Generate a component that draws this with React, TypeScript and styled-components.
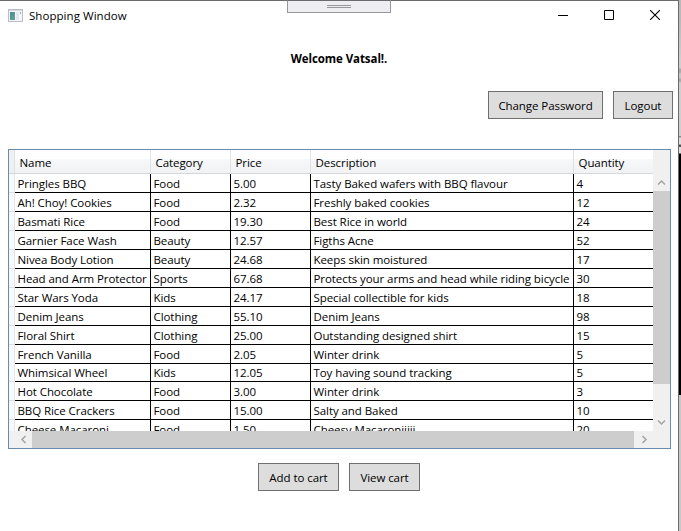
import React from 'react';
import styled, { createGlobalStyle } from 'styled-components';

const GlobalStyle = createGlobalStyle`
  * { box-sizing: border-box; }
  body {
    margin: 0;
    overflow: hidden;
    background: #fff;
    color: #000;
    font: 11.5px/16px "Open Sans", "Noto Sans", sans-serif;
    letter-spacing: -0.07px;
  }
`;

const Screen = styled.div`
  display: grid;
  grid-template-columns: 679px 2px;
  width: 681px;
  height: 531px;
`;

const Window = styled.main`
  position: relative;
  display: flex;
  flex-direction: column;
  border-top: 1px solid #6b6a6c;
  border-right: 1px solid #6b6a6c;
  background: #fff;
`;

const Backdrop = styled.aside`
  background: linear-gradient(
    #b9b9b9 0 20px, #cfcfcf 60px 68px, #aaa 69px 72px, #c8c8c8 74px 78px, #aaa 79px 81px,
    #cfcfcf 83px 136px, #888 136px 137px, #ddd 138px 144px, #555 145px 147px, #ddd 147px 153px,
    #000 154px 395px, #c8c8c8 395px
  );
`;

const TitleBar = styled.header`
  display: flex;
  align-items: center;
  height: 28px;
  padding: 0 1px 0 8px;
  flex: none;
`;

const Title = styled.span`
  flex: 1;
  margin-left: 6px;
  padding-top: 1px;
  letter-spacing: 0.05px;
`;

const Caption = styled.span`
  display: flex;
  justify-content: center;
  width: 46px;
  svg { display: block; }
  &:last-child { width: 45px; }
`;

const DebugHandle = styled.div`
  position: absolute;
  top: -1px;
  left: 287px;
  display: flex;
  justify-content: center;
  width: 104px;
  height: 13px;
  padding-top: 5px;
  border: 1px solid #97969b;
  border-top-color: #6b6a6c;
  background: #eeeef2;
`;

const Grip = styled.span`
  width: 24px;
  height: 3px;
  margin-top: -1px;
  border: solid #97969b;
  border-width: 1px 0;
`;

const Welcome = styled.h1`
  margin: 22px 0 0;
  font-size: 11.5px;
  line-height: 16px;
  font-weight: 700;
  text-align: center;
`;

const Actions = styled.div<{ $align: string; $top: number; $right?: number }>`
  display: flex;
  justify-content: ${p => p.$align};
  gap: 10px;
  margin-top: ${p => p.$top}px;
  padding-right: ${p => p.$right ?? 0}px;
`;

const Button = styled.button<{ $width: number }>`
  width: ${p => p.$width}px;
  height: 28px;
  padding: 1px 0 0;
  border: 1px solid #707070;
  background: #ddd;
  color: #000;
  font: inherit;
  letter-spacing: inherit;
  white-space: nowrap;
`;

const DataGrid = styled.section`
  display: grid;
  grid-template-columns: 644px 17px;
  grid-template-rows: 281px 17px;
  width: 663px;
  height: 300px;
  margin: 30px 0 0 8px;
  border: 1px solid #688caf;
  background: #f0f0f0;
`;

const Viewport = styled.div`
  overflow: hidden;
  background: #fff;
`;

const columns = '6px 136px 80px 80px 263px 79px';

const HeaderRow = styled.div`
  display: grid;
  grid-template-columns: ${columns};
  height: 24px;
  background: linear-gradient(#fff 0 40%, #f7f8fa 41%, #f0f2f4);
  border-bottom: 1px solid #d5d8da;
`;

const HeaderCell = styled.div`
  padding: 5px 0 0 4.5px;
  border-right: 1px solid #dfe1e4;
  &:first-child { background: #f0f0f0; padding: 0; }
  &:last-child { border-right: 0; }
`;

const Row = styled.div<{ $height: number }>`
  display: grid;
  grid-template-columns: ${columns};
  height: ${p => p.$height}px;
`;

const RowHeader = styled.div`
  border-right: 1px solid #e3e5e7;
  border-bottom: 1px solid #dde0e3;
  background: #f8f9fa;
`;

const Cell = styled.div`
  padding: 2px 0 0 2.5px;
  border-right: 1px solid #000;
  border-bottom: 1px solid #000;
  white-space: nowrap;
  &:last-child { border-right: 0; }
`;

const Track = styled.div<{ $vertical?: boolean }>`
  display: flex;
  flex-direction: ${p => (p.$vertical ? 'column' : 'row')};
  padding: ${p => (p.$vertical ? '24px 0 0' : '0 0 0 6px')};
`;

const Arrow = styled.span`
  display: flex;
  align-items: center;
  justify-content: center;
  width: 17px;
  height: 17px;
`;

const Thumb = styled.span<{ $size: number; $after: string }>`
  flex: 0 0 ${p => p.$size}px;
  margin: ${p => p.$after};
  background: #cdcdcd;
`;

const chevrons = {
  up: 'M1 6.5 4.5 3 8 6.5',
  down: 'M1 2.5 4.5 6 8 2.5',
  left: 'M6.5 1 3 4.5 6.5 8',
  right: 'M2.5 1 6 4.5 2.5 8',
};

function Chevron({ to }: { to: keyof typeof chevrons }) {
  return (
    <Arrow>
      <svg width="9" height="9" viewBox="0 0 9 9" fill="none" stroke="#a3a3a3" strokeWidth="1.5">
        <path d={chevrons[to]} />
      </svg>
    </Arrow>
  );
}

function AppIcon() {
  return (
    <svg width="15" height="13" viewBox="0 0 15 13">
      <defs>
        <linearGradient id="pane" x2="1" y2="1">
          <stop stopColor="#4a87a0" />
          <stop offset="1" stopColor="#65a58b" />
        </linearGradient>
      </defs>
      <rect x=".5" y=".5" width="14" height="12" fill="#f4f6f8" stroke="#b9bec6" />
      <path d="M1 1.5h13" stroke="#d5dae2" />
      <rect x="2" y="3" width="5" height="8" fill="url(#pane)" />
      <rect x="8" y="3" width="3" height="8" fill="#e2e8ed" />
      <path d="M12 3h1v2h-1z" fill="#8bb5a8" />
    </svg>
  );
}

const products = [
  ['Pringles BBQ', 'Food', '5.00', 'Tasty Baked wafers with BBQ flavour', '4'],
  ['Ah! Choy! Cookies', 'Food', '2.32', 'Freshly baked cookies', '12'],
  ['Basmati Rice', 'Food', '19.30', 'Best Rice in world', '24'],
  ['Garnier Face Wash', 'Beauty', '12.57', 'Figths Acne', '52'],
  ['Nivea Body Lotion', 'Beauty', '24.68', 'Keeps skin moistured', '17'],
  ['Head and Arm Protector', 'Sports', '67.68', 'Protects your arms and head while riding bicycle', '30'],
  ['Star Wars Yoda', 'Kids', '24.17', 'Special collectible for kids', '18'],
  ['Denim Jeans', 'Clothing', '55.10', 'Denim Jeans', '98'],
  ['Floral Shirt', 'Clothing', '25.00', 'Outstanding designed shirt', '15'],
  ['French Vanilla', 'Food', '2.05', 'Winter drink', '5'],
  ['Whimsical Wheel', 'Kids', '12.05', 'Toy having sound tracking', '5'],
  ['Hot Chocolate', 'Food', '3.00', 'Winter drink', '3'],
  ['BBQ Rice Crackers', 'Food', '15.00', 'Salty and Baked', '10'],
  ['Cheese Macaroni', 'Food', '1.50', 'Cheesy Macaroniiiii', '20'],
];

export default function App() {
  return (
    <Screen>
      <GlobalStyle />
      <Window>
        <TitleBar>
          <AppIcon />
          <Title>Shopping Window</Title>
          <Caption>
            <svg width="10" height="10"><path d="M0 5.5h10" stroke="#000" /></svg>
          </Caption>
          <Caption>
            <svg width="10" height="10"><path d="M.5.5h9v9h-9z" fill="none" stroke="#000" /></svg>
          </Caption>
          <Caption>
            <svg width="10" height="10"><path d="M0 0 10 10M10 0 0 10" stroke="#000" strokeWidth="1.1" /></svg>
          </Caption>
        </TitleBar>
        <DebugHandle><Grip /></DebugHandle>
        <Welcome>Welcome Vatsal!.</Welcome>
        <Actions $align="flex-end" $top={24} $right={5}>
          <Button $width={115}>Change Password</Button>
          <Button $width={60}>Logout</Button>
        </Actions>
        <DataGrid>
          <Viewport>
            <HeaderRow>
              {['', 'Name', 'Category', 'Price', 'Description', 'Quantity'].map(h => (
                <HeaderCell key={h}>{h}</HeaderCell>
              ))}
            </HeaderRow>
            {products.map((product, i) => (
              <Row key={product[0]} $height={i === 9 ? 18 : 19}>
                <RowHeader />
                {product.map((value, c) => <Cell key={c}>{value}</Cell>)}
              </Row>
            ))}
          </Viewport>
          <Track $vertical>
            <Chevron to="up" />
            <Thumb $size={193} $after="0 0 31px" />
            <Chevron to="down" />
          </Track>
          <Track>
            <Chevron to="left" />
            <Thumb $size={602} $after="0 2px 0 0" />
            <Chevron to="right" />
          </Track>
        </DataGrid>
        <Actions $align="center" $top={14}>
          <Button $width={81}>Add to cart</Button>
          <Button $width={71}>View cart</Button>
        </Actions>
      </Window>
      <Backdrop />
    </Screen>
  );
}
